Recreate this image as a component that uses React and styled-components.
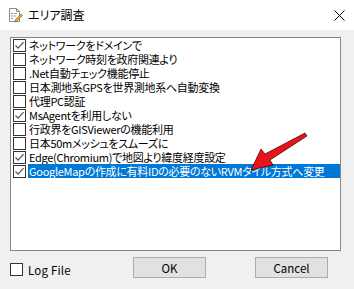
import React from "react";
import styled, { createGlobalStyle } from "styled-components";

const Global = createGlobalStyle`
  html, body { margin: 0; padding: 0; background: #f0f0f0; }
  body { font-family: "Noto Sans CJK JP", "Liberation Sans", sans-serif; }
`;

const Window = styled.div`
  width: 354px;
  height: 289px;
  background: #f0f0f0;
  display: flex;
  flex-direction: column;
  overflow: hidden;
`;

const TitleBar = styled.div`
  height: 30px;
  background: #ffffff;
  display: flex;
  align-items: center;
  padding: 0 9px 0 7px;
  box-sizing: border-box;
  flex: none;
`;

const TitleText = styled.div`
  font-size: 12px;
  color: #000;
  margin-left: 5px;
  flex: 1;
  font-feature-settings: "palt";
  line-height: 16px;
`;

const Body = styled.div`
  flex: 1;
  display: flex;
  flex-direction: column;
  padding: 7px 13px 0 10px;
`;

const ListBox = styled.div`
  position: relative;
  height: 214px;
  box-sizing: border-box;
  border: 1px solid #828790;
  background: #ffffff;
  overflow: hidden;
`;

const Row = styled.div`
  display: flex;
  align-items: center;
  height: 14px;
  padding-left: 2px;
  white-space: nowrap;
`;

const Label = styled.span`
  margin-left: 2px;
  padding-left: 1px;
  flex: 1;
  min-width: 0;
  height: 14px;
  line-height: 14px;
  font-size: 11px;
  font-feature-settings: "palt";
  letter-spacing: -0.3px;
  color: ${(p) => (p.$selected ? "#ffffff" : "#000000")};
  background: ${(p) => (p.$selected ? "#0078d7" : "transparent")};
`;

const Box = styled.span`
  width: 13px;
  height: 13px;
  box-sizing: border-box;
  border: 1px solid #333333;
  background: #ffffff;
  display: inline-flex;
  align-items: center;
  justify-content: center;
  flex: none;
`;

const Footer = styled.div`
  display: flex;
  align-items: center;
  margin-top: 6px;
  height: 21px;
`;

const FooterCheck = styled.label`
  display: flex;
  align-items: center;
  width: 123px;
  font-size: 11.5px;
  color: #000;
  padding-top: 4px;
`;

const FooterText = styled.span`
  margin-left: 5px;
  letter-spacing: 0.2px;
`;

const Button = styled.div`
  width: 73px;
  height: 21px;
  box-sizing: border-box;
  background: #e1e1e1;
  border: 1px solid #adadad;
  display: flex;
  align-items: center;
  justify-content: center;
  font-size: 11.5px;
  color: #000;
  margin-right: ${(p) => p.$gap || 0}px;
`;

const Arrow = styled.svg`
  position: absolute;
  left: 0;
  top: 0;
  pointer-events: none;
`;

const Check = () => (
  <svg width="11" height="11" viewBox="0 0 11 11">
    <path d="M1.5 5.5 L4.2 8.2 L9.5 2.2" fill="none" stroke="#555" strokeWidth="1.2" />
  </svg>
);

const CheckBox = ({ checked }) => <Box>{checked ? <Check /> : null}</Box>;

const AppIcon = () => (
  <svg width="16" height="16" viewBox="0 0 16 16">
    <path d="M2.5 1.5 H9.5 L12.5 4.5 V14.5 H2.5 Z" fill="#fff" stroke="#8a8a8a" />
    <path d="M9.5 1.5 V4.5 H12.5" fill="none" stroke="#8a8a8a" />
    <rect x="4" y="6" width="2" height="1" fill="#6a8fc8" />
    <rect x="4" y="8.5" width="2" height="1" fill="#6a8fc8" />
    <rect x="4" y="11" width="2" height="1" fill="#6a8fc8" />
    <rect x="7" y="6" width="3" height="1" fill="#9a9a9a" />
    <rect x="7" y="8.5" width="2" height="1" fill="#9a9a9a" />
    <path d="M8 13 L14 7 L15.5 8.5 L9.5 14.5 L7.5 15 Z" fill="#e7a53b" stroke="#8a5a1a" strokeWidth="0.6" />
  </svg>
);

const CloseIcon = () => (
  <svg width="11" height="11" viewBox="0 0 11 11">
    <path d="M0.5 0.5 L10.5 10.5 M10.5 0.5 L0.5 10.5" stroke="#000" strokeWidth="1" />
  </svg>
);

const items = [
  { t: "ネットワークをドメインで", c: true },
  { t: "ネットワーク時刻を政府関連より", c: false },
  { t: ".Net自動チェック機能停止", c: false },
  { t: "日本測地系GPSを世界測地系へ自動変換", c: false },
  { t: "代理PC認証", c: false },
  { t: "MsAgentを利用しない", c: true },
  { t: "行政界をGISViewerの機能利用", c: false },
  { t: "日本50mメッシュをスムーズに", c: false },
  { t: "Edge(Chromium)で地図より緯度経度設定", c: true },
  { t: "GoogleMapの作成に有料IDの必要のないRVMタイル方式へ変更", c: true, s: true },
];

export default function App() {
  return (
    <Window>
      <Global />
      <TitleBar>
        <AppIcon />
        <TitleText>エリア調査</TitleText>
        <CloseIcon />
      </TitleBar>
      <Body>
        <ListBox>
          {items.map((it, i) => (
            <Row key={i}>
              <CheckBox checked={it.c} />
              <Label $selected={it.s}>{it.t}</Label>
            </Row>
          ))}
          <Arrow width="330" height="212" viewBox="0 0 330 212">
            <path
              d="M294 95 L296 98 L259 122 L262 127 L240 132 L250 111 L254 116 Z"
              fill="#e8141a"
              stroke="#300"
              strokeWidth="0.7"
            />
          </Arrow>
        </ListBox>
        <Footer>
          <FooterCheck>
            <CheckBox checked={false} />
            <FooterText>Log File</FooterText>
          </FooterCheck>
          <Button $gap={49}>OK</Button>
          <Button>Cancel</Button>
        </Footer>
      </Body>
    </Window>
  );
}
